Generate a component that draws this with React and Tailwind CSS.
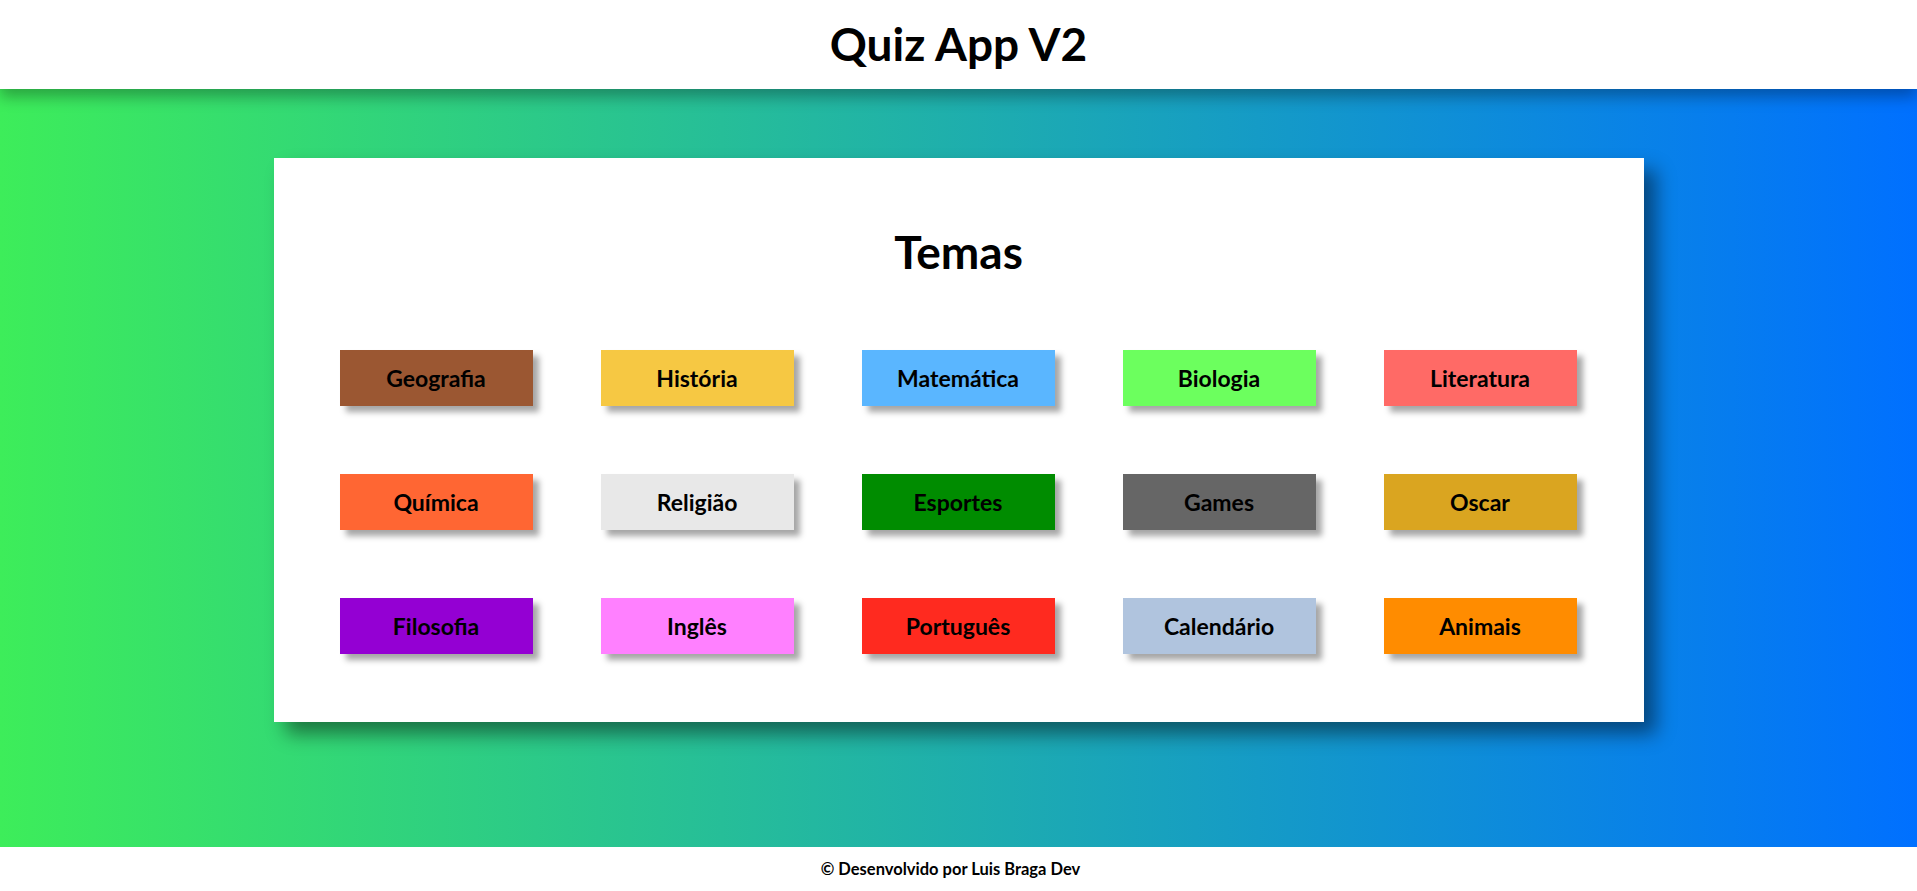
const temas = [
  { nome: 'Geografia', cor: 'bg-[#9b5732]' },
  { nome: 'História', cor: 'bg-[#f6c843]' },
  { nome: 'Matemática', cor: 'bg-[#5ab6ff]' },
  { nome: 'Biologia', cor: 'bg-[#6cff5e]' },
  { nome: 'Literatura', cor: 'bg-[#ff6a66]' },
  { nome: 'Química', cor: 'bg-[#ff6633]' },
  { nome: 'Religião', cor: 'bg-[#e8e8e8]' },
  { nome: 'Esportes', cor: 'bg-[#008c00]' },
  { nome: 'Games', cor: 'bg-[#666666]' },
  { nome: 'Oscar', cor: 'bg-[#daa520]' },
  { nome: 'Filosofia', cor: 'bg-[#9400d3]' },
  { nome: 'Inglês', cor: 'bg-[#ff80ff]' },
  { nome: 'Português', cor: 'bg-[#ff2a1f]' },
  { nome: 'Calendário', cor: 'bg-[#b0c4de]' },
  { nome: 'Animais', cor: 'bg-[#ff8c00]' },
];

export default function App() {
  return (
    <div className="flex min-h-screen flex-col font-['Lato',sans-serif] text-black">
      {/* cabeçalho */}
      <header className="relative z-10 flex h-[89px] items-center justify-center bg-white shadow-[0_8px_14px_rgba(0,0,0,0.3)]">
        <h1 className="-mt-[2px] text-[46px] font-bold leading-none">Quiz App V2</h1>
      </header>

      <main className="flex h-[758px] flex-col items-center bg-[linear-gradient(to_right,#3ded5a,#0070ff)] pt-[69px]">
        <div className="w-[1370px] bg-white px-[66px] pt-[69px] pb-[68px] shadow-[12px_12px_18px_rgba(0,0,0,0.45)]">
          <h2 className="mb-[73px] text-center text-[46px] font-bold leading-[50px]">Temas</h2>

          <div className="grid grid-cols-[repeat(5,193px)] gap-x-[68px] gap-y-[68px]">
            {temas.map((tema) => (
              <button
                key={tema.nome}
                className={`${tema.cor} flex h-[56px] items-center justify-center text-[23px] font-bold shadow-[6px_6px_6px_rgba(0,0,0,0.35)]`}
              >
                {tema.nome}
              </button>
            ))}
          </div>
        </div>
      </main>

      <footer className="flex h-[44px] items-center justify-center bg-white pr-[16px] text-[16.5px] font-bold">
        © Desenvolvido por Luis Braga Dev
      </footer>
    </div>
  );
}
